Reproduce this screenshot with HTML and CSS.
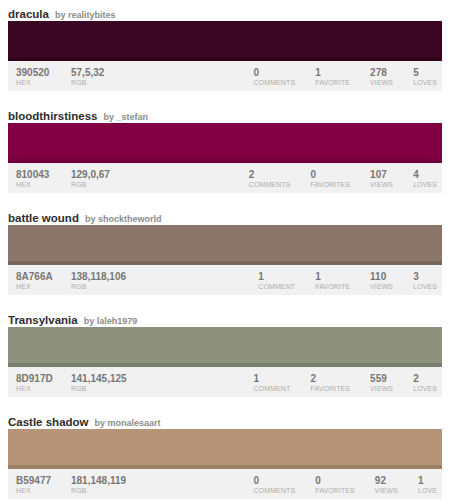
FILE: index.html
```html
<!DOCTYPE html>
<html>
<head>
<meta charset="utf-8">
<link rel="stylesheet" href="styles.css">
</head>
<body>
<div class="list">
  <div class="palette">
    <div class="head"><span class="name">dracula</span><span class="by">by realitybites</span></div>
    <div class="swatch" style="background:#390520"></div>
    <div class="info">
      <div class="stat hex"><b>390520</b><span>HEX</span></div>
      <div class="stat"><b>57,5,32</b><span>RGB</span></div>
      <div class="counts">
        <div class="stat"><b>0</b><span>COMMENTS</span></div>
        <div class="stat"><b>1</b><span>FAVORITE</span></div>
        <div class="stat"><b>278</b><span>VIEWS</span></div>
        <div class="stat"><b>5</b><span>LOVES</span></div>
      </div>
    </div>
  </div>
  <div class="palette">
    <div class="head"><span class="name">bloodthirstiness</span><span class="by">by _stefan</span></div>
    <div class="swatch" style="background:#810043"></div>
    <div class="info">
      <div class="stat hex"><b>810043</b><span>HEX</span></div>
      <div class="stat"><b>129,0,67</b><span>RGB</span></div>
      <div class="counts">
        <div class="stat"><b>2</b><span>COMMENTS</span></div>
        <div class="stat"><b>0</b><span>FAVORITES</span></div>
        <div class="stat"><b>107</b><span>VIEWS</span></div>
        <div class="stat"><b>4</b><span>LOVES</span></div>
      </div>
    </div>
  </div>
  <div class="palette">
    <div class="head"><span class="name">battle wound</span><span class="by">by shocktheworld</span></div>
    <div class="swatch" style="background:#8A766A"></div>
    <div class="info">
      <div class="stat hex"><b>8A766A</b><span>HEX</span></div>
      <div class="stat"><b>138,118,106</b><span>RGB</span></div>
      <div class="counts">
        <div class="stat"><b>1</b><span>COMMENT</span></div>
        <div class="stat"><b>1</b><span>FAVORITE</span></div>
        <div class="stat"><b>110</b><span>VIEWS</span></div>
        <div class="stat"><b>3</b><span>LOVES</span></div>
      </div>
    </div>
  </div>
  <div class="palette">
    <div class="head"><span class="name">Transylvania</span><span class="by">by laleh1979</span></div>
    <div class="swatch" style="background:#8D917D"></div>
    <div class="info">
      <div class="stat hex"><b>8D917D</b><span>HEX</span></div>
      <div class="stat"><b>141,145,125</b><span>RGB</span></div>
      <div class="counts">
        <div class="stat"><b>1</b><span>COMMENT</span></div>
        <div class="stat"><b>2</b><span>FAVORITES</span></div>
        <div class="stat"><b>559</b><span>VIEWS</span></div>
        <div class="stat"><b>2</b><span>LOVES</span></div>
      </div>
    </div>
  </div>
  <div class="palette">
    <div class="head"><span class="name">Castle shadow</span><span class="by">by monalesaart</span></div>
    <div class="swatch" style="background:#B59477"></div>
    <div class="info">
      <div class="stat hex"><b>B59477</b><span>HEX</span></div>
      <div class="stat"><b>181,148,119</b><span>RGB</span></div>
      <div class="counts">
        <div class="stat"><b>0</b><span>COMMENTS</span></div>
        <div class="stat"><b>0</b><span>FAVORITES</span></div>
        <div class="stat"><b>92</b><span>VIEWS</span></div>
        <div class="stat"><b>1</b><span>LOVE</span></div>
      </div>
    </div>
  </div>
</div>
</body>
</html>
```
FILE: styles.css
```css
body {
  margin: 8px 8px 0 8px;
  background: #ffffff;
  font-family: "Liberation Sans", Arial, sans-serif;
}
.list {
  width: 436px;
}
.palette {
  margin-bottom: 19px;
}
.palette:last-child {
  margin-bottom: 0;
}
.head {
  height: 13px;
  display: flex;
  align-items: flex-end;
  white-space: nowrap;
}
.name {
  font-size: 11.5px;
  font-weight: bold;
  color: #2e2e2e;
  line-height: 13px;
}
.by {
  font-size: 9px;
  font-weight: bold;
  color: #8c8c8c;
  margin-left: 6px;
  line-height: 12px;
}
.swatch {
  height: 40px;
  box-shadow: inset 0 -4px 0 rgba(0, 0, 0, 0.13);
}
.info {
  height: 30px;
  background: #f1f1f1;
  display: flex;
  padding-left: 8px;
  padding-right: 7px;
  box-sizing: border-box;
}
.stat {
  display: flex;
  flex-direction: column;
  padding-top: 6px;
}
.stat b {
  font-size: 10px;
  line-height: 11px;
  color: #777777;
}
.stat span {
  font-size: 7px;
  line-height: 9px;
  color: #adadad;
  letter-spacing: 0.1px;
}
.hex {
  width: 55px;
}
.counts {
  margin-left: auto;
  display: flex;
  gap: 20px;
}
```
